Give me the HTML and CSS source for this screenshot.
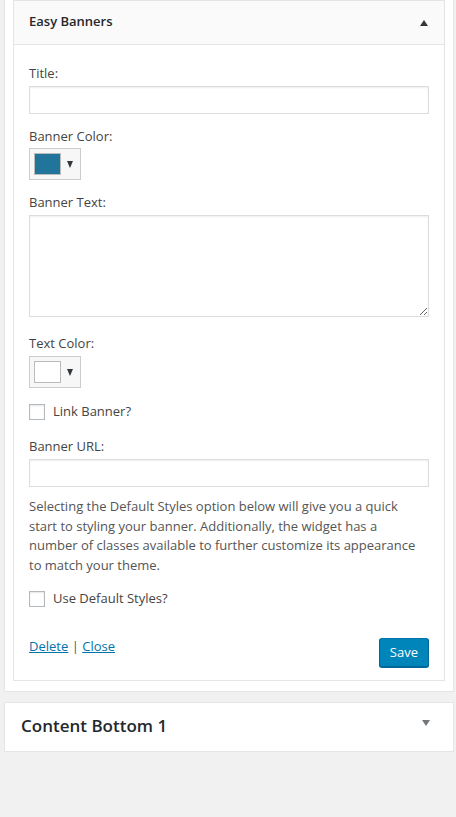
FILE: index.html
```html
<!DOCTYPE html>
<html>
<head>
<meta charset="utf-8">
<link rel="stylesheet" href="styles.css">
</head>
<body>
<div class="sidebar open">
  <div class="widget">
    <div class="widget-top">
      <h3 class="widget-title">Easy Banners</h3>
      <span class="arrow arrow-up"></span>
    </div>
    <div class="widget-inside">
      <div class="field">
        <label class="lbl">Title:</label>
        <input class="text-input" type="text">
      </div>
      <div class="field gap-12">
        <label class="lbl lbl-tight">Banner Color:</label>
        <span class="color-btn"><span class="swatch swatch-blue"></span><span class="caret"></span></span>
      </div>
      <div class="field gap-12">
        <label class="lbl">Banner Text:</label>
        <textarea class="textarea"></textarea>
      </div>
      <div class="field gap-16">
        <label class="lbl">Text Color:</label>
        <span class="color-btn"><span class="swatch swatch-white"></span><span class="caret"></span></span>
      </div>
      <div class="check-row gap-13">
        <span class="checkbox"></span>
        <span class="check-label">Link Banner?</span>
      </div>
      <div class="field gap-15">
        <label class="lbl">Banner URL:</label>
        <input class="text-input" type="text">
      </div>
      <p class="description">Selecting the Default Styles option below will give you a quick start to styling your banner. Additionally, the widget has a number of classes available to further customize its appearance to match your theme.</p>
      <div class="check-row gap-13">
        <span class="checkbox"></span>
        <span class="check-label">Use Default Styles?</span>
      </div>
      <div class="widget-control">
        <div class="links"><a class="link" href="#">Delete</a> <span class="sep">|</span> <a class="link" href="#">Close</a></div>
        <span class="save-btn">Save</span>
      </div>
    </div>
  </div>
</div>
<div class="sidebar closed">
  <h2 class="sidebar-name">Content Bottom 1</h2>
  <span class="arrow arrow-down"></span>
</div>
</body>
</html>
```

FILE: styles.css
```css
html, body {
  margin: 0;
  padding: 0;
  background: #f1f1f1;
}
body {
  font-family: "Open Sans", "Liberation Sans", sans-serif;
  font-size: 13px;
  color: #444;
  width: 456px;
  height: 817px;
}
.sidebar {
  margin-left: 4px;
  width: 450px;
  box-sizing: border-box;
  background: #fff;
  border: 1px solid #e5e5e5;
}
.sidebar.open {
  border-top: none;
  padding: 0 8px 10px 8px;
}
.widget {
  border: 1px solid #e5e5e5;
  background: #fff;
}
.widget-top {
  background: #fafafa;
  border-bottom: 1px solid #e5e5e5;
  display: flex;
  align-items: center;
  justify-content: space-between;
  padding: 13px 16px 15px 15px;
}
.widget-title {
  margin: 0;
  font-size: 13px;
  line-height: 15px;
  font-weight: 600;
  color: #23282d;
}
.arrow {
  display: block;
  width: 0;
  height: 0;
  border-left: 4px solid transparent;
  border-right: 4px solid transparent;
}
.arrow-up {
  border-bottom: 6px solid #32373c;
  margin-top: 2px;
}
.arrow-down {
  border-top: 6px solid #72777c;
}
.widget-inside {
  padding: 18px 15px 13px 15px;
}
.field {
  display: flex;
  flex-direction: column;
  align-items: flex-start;
}
.gap-12 { margin-top: 12px; }
.gap-13 { margin-top: 13px; }
.gap-15 { margin-top: 15px; }
.gap-16 { margin-top: 16px; }
.lbl {
  display: block;
  line-height: 20px;
  margin-bottom: 3px;
}
.lbl-tight { margin-bottom: 2px; }
.text-input {
  display: block;
  width: 400px;
  height: 28px;
  box-sizing: border-box;
  margin: 0;
  border: 1px solid #ddd;
  box-shadow: inset 0 1px 2px rgba(0,0,0,0.07);
  background: #fff;
  padding: 3px 5px;
  font-family: inherit;
  font-size: 14px;
}
.textarea {
  display: block;
  width: 400px;
  height: 102px;
  box-sizing: border-box;
  margin: 0;
  border: 1px solid #ddd;
  box-shadow: inset 0 1px 2px rgba(0,0,0,0.07);
  background: #fff;
  font-family: inherit;
  font-size: 14px;
  resize: vertical;
}
.color-btn {
  display: flex;
  align-items: center;
  box-sizing: border-box;
  width: 52px;
  height: 32px;
  padding: 4px;
  border: 1px solid #ccc;
  background: #f7f7f7;
}
.swatch {
  display: block;
  width: 27px;
  height: 22px;
  box-sizing: border-box;
  border: 1px solid #bbb;
}
.swatch-blue { background: #21759b; }
.swatch-white { background: #fff; }
.caret {
  display: block;
  width: 0;
  height: 0;
  border-left: 3.5px solid transparent;
  border-right: 3.5px solid transparent;
  border-top: 7px solid #32373c;
  margin-left: 6px;
  margin-top: 1px;
}
.check-row {
  display: flex;
  align-items: center;
  height: 20px;
}
.checkbox {
  display: block;
  width: 16px;
  height: 16px;
  box-sizing: border-box;
  border: 1px solid #b4b9be;
  background: #fff;
  box-shadow: inset 0 1px 2px rgba(0,0,0,0.1);
  margin-top: 1px;
}
.check-label {
  margin-left: 8px;
  line-height: 20px;
}
.description {
  margin: 10px 0 0 0;
  line-height: 19.5px;
  color: #555;
}
.widget-control {
  display: flex;
  justify-content: space-between;
  align-items: flex-start;
  margin-top: 28px;
}
.links {
  line-height: 20px;
}
.link {
  color: #0073aa;
  text-decoration: underline;
}
.sep {
  color: #555;
}
.save-btn {
  display: block;
  margin-top: 2px;
  box-sizing: border-box;
  height: 29px;
  line-height: 27px;
  padding: 0 10px;
  background: #0085ba;
  border: 1px solid #0073aa;
  border-color: #0073aa #006799 #006799;
  box-shadow: 0 1px 0 #006799;
  border-radius: 3px;
  color: #fff;
  font-size: 13px;
}
.sidebar.closed {
  margin-top: 10px;
  display: flex;
  align-items: center;
  justify-content: space-between;
  padding: 0 23px 2px 16px;
  height: 50px;
}
.sidebar-name {
  margin: 0;
  font-size: 17px;
  font-weight: 600;
  color: #23282d;
  line-height: 20px;
}
.arrow-down {
  margin-top: -6px;
}
```
